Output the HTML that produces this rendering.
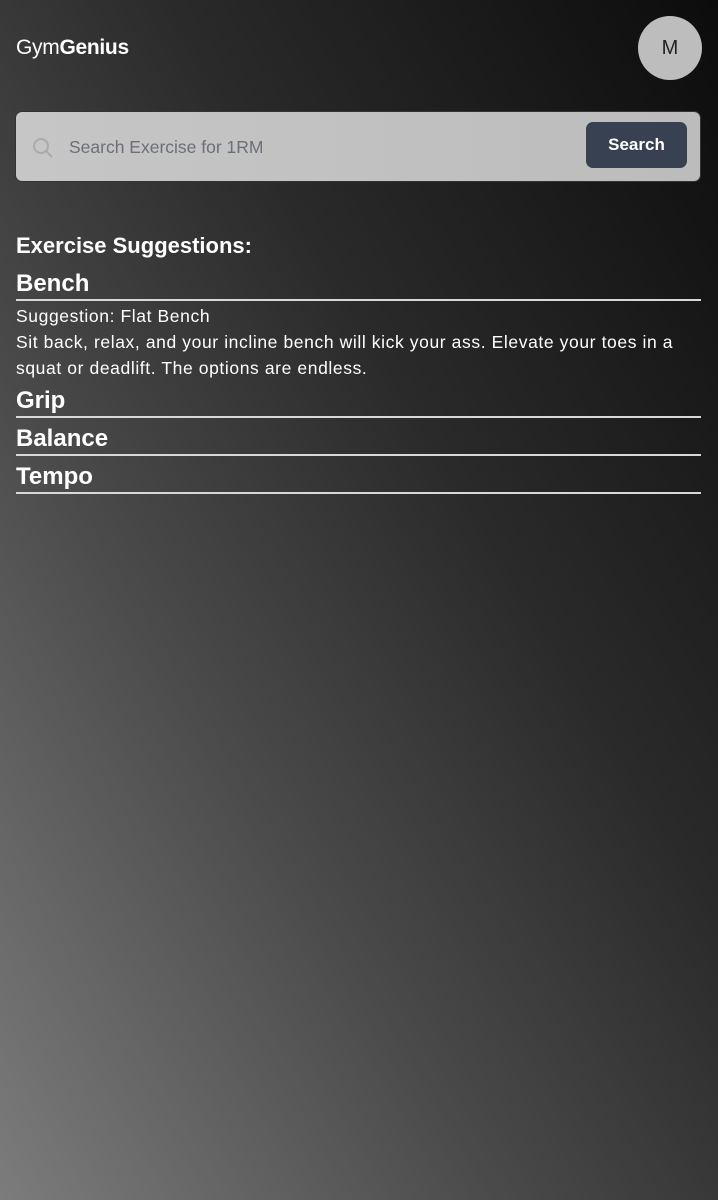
<!DOCTYPE html>
<html><head><meta charset="utf-8"><style>
html,body{margin:0;padding:0}
body{width:718px;height:1200px;overflow:hidden;font-family:"Liberation Sans",sans-serif;color:#fff;
background:linear-gradient(to top right,#7c7c7c 0%,#4a4a4a 35%,#2a2a2a 62%,#0c0c0c 100%);position:relative}
.logo{position:absolute;left:16px;top:36px;font-size:21px;letter-spacing:-0.3px}
.logo b{font-weight:bold}
.av{position:absolute;left:638px;top:16px;width:64px;height:64px;border-radius:50%;background:#bdbdbd;color:#222;font-size:20px;display:flex;align-items:center;justify-content:center}
.sb{position:absolute;left:16px;top:112px;width:684px;height:69px;border-radius:6px;background:linear-gradient(to right,#c6c6c6,#bcbcbc);box-shadow:0 0 0 1px #333}
.sb .ph{position:absolute;left:53px;top:25px;font-size:17.5px;color:#6b6f78}
.sb svg{position:absolute;left:15px;top:24px}
.btn{position:absolute;left:570px;top:10px;width:101px;height:46px;border-radius:7px;background:#374151;color:#fff;font-weight:bold;font-size:17px;display:flex;align-items:center;justify-content:center}
.h{position:absolute;left:16px;font-size:22px;font-weight:bold}
.t{position:absolute;left:16px;width:685px;font-size:24px;font-weight:bold;border-bottom:2px solid #d8d8d8;line-height:30px}
.p{position:absolute;left:16px;font-size:17.5px;line-height:26px;width:700px;letter-spacing:0.6px;white-space:nowrap}
</style></head><body>
<div class="logo">Gym<b>Genius</b></div>
<div class="av">M</div>
<div class="sb"><svg width="24" height="24" viewBox="0 0 24 24" fill="none" stroke="#aaa" stroke-width="2"><circle cx="10" cy="10" r="7"/><path d="M15 15l6 6"/></svg><div class="ph">Search Exercise for 1RM</div><div class="btn">Search</div></div>
<div class="h" style="top:233px">Exercise Suggestions:</div>
<div class="t" style="top:269px">Bench</div>
<div class="p" style="top:303px">Suggestion: Flat Bench<br>Sit back, relax, and your incline bench will kick your ass. Elevate your toes in a<br>squat or deadlift. The options are endless.</div>
<div class="t" style="top:386px">Grip</div>
<div class="t" style="top:424px">Balance</div>
<div class="t" style="top:462px">Tempo</div>
</body></html>
